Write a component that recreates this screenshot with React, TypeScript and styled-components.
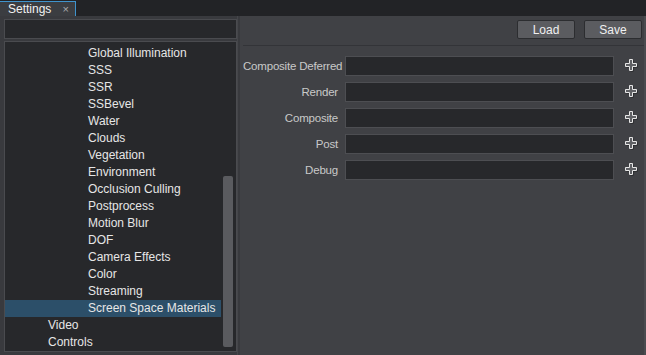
import React from 'react'
import styled, { createGlobalStyle } from 'styled-components'

const GlobalStyle = createGlobalStyle`
  html, body {
    margin: 0;
    padding: 0;
    background: #222326;
  }

  body {
    font-family: 'Liberation Sans', Arial, sans-serif;
    font-size: 11px;
    color: #dedede;
  }
`

const StyledWindow = styled.div`
  width: 646px;
  height: 355px;
  display: flex;
  flex-direction: column;
  overflow: hidden;
`

const StyledTabBar = styled.div`
  height: 18px;
  padding-top: 1px;
  box-sizing: border-box;
  display: flex;
  background: #222326;
`

const StyledTab = styled.div`
  width: 76px;
  box-sizing: border-box;
  display: flex;
  align-items: center;
  justify-content: space-between;
  padding: 0 6px 0 8px;

  background: #3b3d41;
  border-top: 1px solid #3f93cc;
  border-right: 1px solid #3f93cc;

  font-size: 12px;
  color: #f2f2f2;

  span {
    color: #a9aaad;
    font-size: 11px;
  }
`

const StyledBody = styled.div`
  flex: 1;
  display: flex;
  background: #393a3e;
`

const StyledLeftPane = styled.div`
  width: 237px;
  padding: 3px 0 3px 4px;
  box-sizing: border-box;
  display: flex;
  flex-direction: column;
  gap: 2px;
`

const StyledSplitter = styled.div`
  width: 3px;
  border-left: 1px solid #45464a;
  box-sizing: border-box;
`

const StyledSearch = styled.div`
  height: 20px;
  box-sizing: border-box;
  background: #27282b;
  border: 1px solid #4a4b4f;
`

const StyledTree = styled.div`
  flex: 1;
  display: flex;
  background: #27282b;
  border: 1px solid #4a4b4f;
  overflow: hidden;
`

const StyledTreeList = styled.ul`
  flex: 1;
  margin: 0;
  padding: 3px 0 0 0;
  list-style: none;
`

const StyledTreeItem = styled.li<{ $level: number; $selected?: boolean }>`
  height: 17px;
  line-height: 17px;
  padding-left: ${(props) => (props.$level === 1 ? 43 : 83)}px;
  background: ${(props) => (props.$selected ? '#2c4f69' : 'transparent')};
  font-size: 12px;
  color: #e6e6e6;
  white-space: nowrap;
`

const StyledScrollTrack = styled.div`
  width: 15px;
  padding: 0 3px 0 2px;
  box-sizing: border-box;
`

const StyledScrollThumb = styled.div<{ $top: number; $height: number }>`
  margin-top: ${(props) => props.$top}px;
  height: ${(props) => props.$height}px;
  background: #5a5b5f;
  border-radius: 2px;
`

const StyledRightPane = styled.div`
  flex: 1;
  display: flex;
  flex-direction: column;
  background: #404145;
  border-right: 2px solid #4a4b4f;
`

const StyledToolbar = styled.div`
  height: 30px;
  margin-left: 3px;
  padding: 4px 2px 0 0;
  box-sizing: border-box;
  display: flex;
  justify-content: flex-end;
  gap: 9px;
  border-bottom: 1px solid #333438;
`

const StyledButton = styled.button`
  width: 58px;
  height: 19px;
  padding: 0;

  background: #5b5c60;
  border: 1px solid #2c2d30;
  border-radius: 2px;

  font-family: 'Liberation Sans', Arial, sans-serif;
  font-size: 12px;
  color: #f0f0f0;
`

const StyledForm = styled.div`
  display: grid;
  grid-template-columns: 95px 269px 20px;
  column-gap: 7px;
  row-gap: 6px;
  align-items: center;
  padding: 10px 0 0 3px;
`

const StyledLabel = styled.div`
  text-align: right;
  font-size: 11.5px;
  letter-spacing: -0.2px;
  color: #c9c9c9;
  white-space: nowrap;
`

const StyledField = styled.div`
  height: 20px;
  box-sizing: border-box;
  background: #27282b;
  border: 1px solid #4d4e52;
`

const StyledPlus = styled.svg`
  display: block;
  justify-self: center;
  margin-top: -1px;
`

const PlusIcon: React.FC = () => (
  <StyledPlus width="13" height="13" viewBox="0 0 13 13">
    <polygon
      points="5.5,1.5 8.5,1.5 8.5,5.5 12.5,5.5 12.5,8.5 8.5,8.5 8.5,12.5 5.5,12.5 5.5,8.5 1.5,8.5 1.5,5.5 5.5,5.5"
      fill="#1d1e20"
    />
    <polygon
      points="4.5,0.5 7.5,0.5 7.5,4.5 11.5,4.5 11.5,7.5 7.5,7.5 7.5,11.5 4.5,11.5 4.5,7.5 0.5,7.5 0.5,4.5 4.5,4.5"
      fill="#606165"
      stroke="#e6e6e6"
      strokeWidth="1"
    />
  </StyledPlus>
)

const treeItems = [
  { name: 'Global Illumination', level: 2 },
  { name: 'SSS', level: 2 },
  { name: 'SSR', level: 2 },
  { name: 'SSBevel', level: 2 },
  { name: 'Water', level: 2 },
  { name: 'Clouds', level: 2 },
  { name: 'Vegetation', level: 2 },
  { name: 'Environment', level: 2 },
  { name: 'Occlusion Culling', level: 2 },
  { name: 'Postprocess', level: 2 },
  { name: 'Motion Blur', level: 2 },
  { name: 'DOF', level: 2 },
  { name: 'Camera Effects', level: 2 },
  { name: 'Color', level: 2 },
  { name: 'Streaming', level: 2 },
  { name: 'Screen Space Materials', level: 2, selected: true },
  { name: 'Video', level: 1 },
  { name: 'Controls', level: 1 },
]

const fields = ['Composite Deferred', 'Render', 'Composite', 'Post', 'Debug']

const App: React.FC = () => {
  return (
    <StyledWindow>
      <GlobalStyle />
      <StyledTabBar>
        <StyledTab>
          Settings
          <span>×</span>
        </StyledTab>
      </StyledTabBar>
      <StyledBody>
        <StyledLeftPane>
          <StyledSearch />
          <StyledTree>
            <StyledTreeList>
              {treeItems.map((item) => (
                <StyledTreeItem key={item.name} $level={item.level} $selected={item.selected}>
                  {item.name}
                </StyledTreeItem>
              ))}
            </StyledTreeList>
            <StyledScrollTrack>
              <StyledScrollThumb $top={134} $height={171} />
            </StyledScrollTrack>
          </StyledTree>
        </StyledLeftPane>
        <StyledSplitter />
        <StyledRightPane>
          <StyledToolbar>
            <StyledButton>Load</StyledButton>
            <StyledButton>Save</StyledButton>
          </StyledToolbar>
          <StyledForm>
            {fields.map((field) => (
              <React.Fragment key={field}>
                <StyledLabel>{field}</StyledLabel>
                <StyledField />
                <PlusIcon />
              </React.Fragment>
            ))}
          </StyledForm>
        </StyledRightPane>
      </StyledBody>
    </StyledWindow>
  )
}

export default App
